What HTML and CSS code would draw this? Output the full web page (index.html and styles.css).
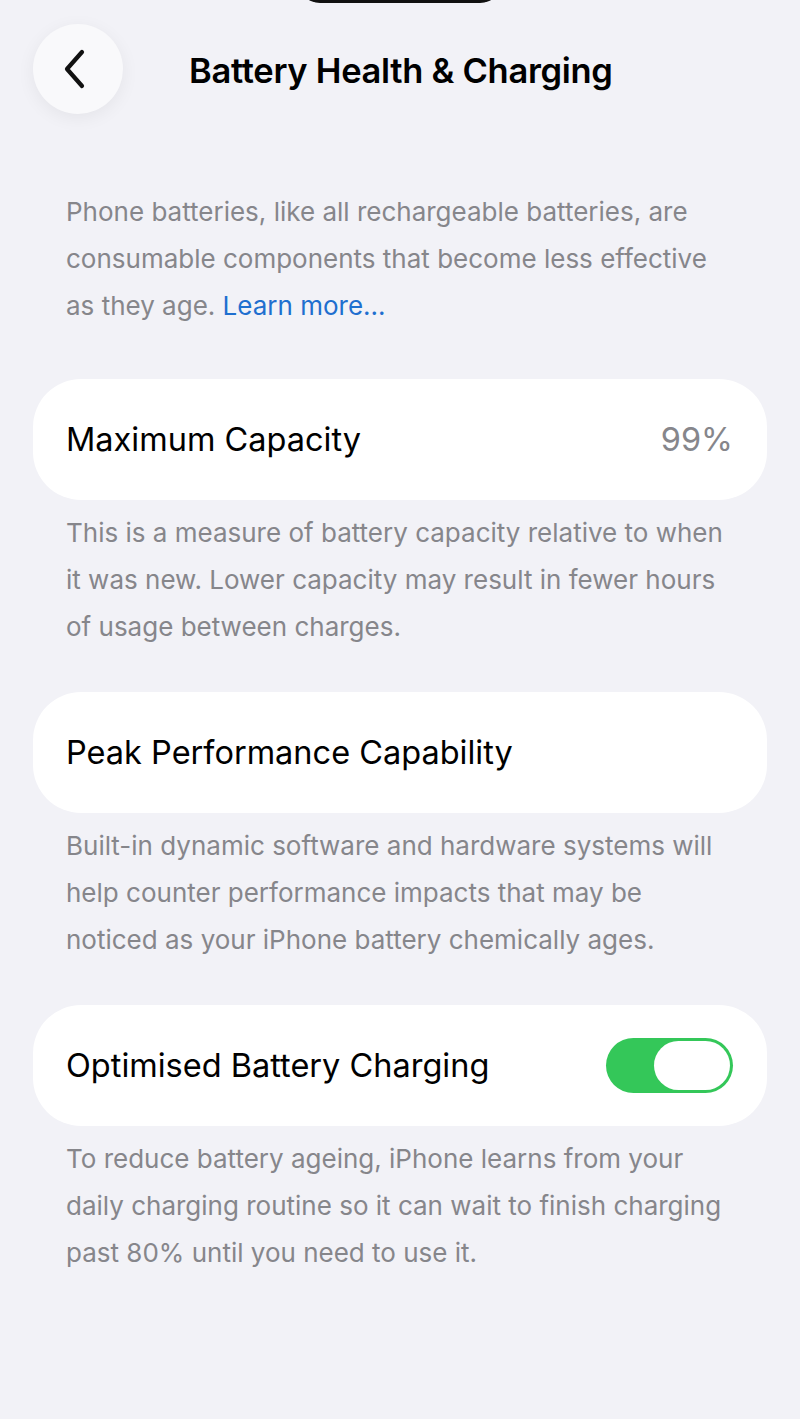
FILE: index.html
```html
<!DOCTYPE html>
<html lang="en">
<head>
    <meta charset="UTF-8">
    <meta name="viewport" content="width=device-width, initial-scale=1.0">
    <title>Battery Health &amp; Charging</title>
    <link rel="stylesheet" href="styles.css">
</head>
<body>
    <div class="island"></div>

    <header class="nav-bar">
        <button class="back-button" aria-label="Back">
            <svg width="26" height="40" viewBox="0 0 26 40">
                <path d="M20 3 L5 20 L20 37" fill="none" stroke="#111" stroke-width="4.2" stroke-linecap="round" stroke-linejoin="round"/>
            </svg>
        </button>
        <h1>Battery Health &amp; Charging</h1>
    </header>

    <main class="content">
        <p class="note intro">
            Phone batteries, like all rechargeable batteries, are consumable components that become less effective as they age. <a href="#" class="link">Learn more...</a>
        </p>

        <div class="card">
            <span class="label">Maximum Capacity</span>
            <span class="value">99%</span>
        </div>
        <p class="note">
            This is a measure of battery capacity relative to when it was new. Lower capacity may result in fewer hours of usage between charges.
        </p>

        <div class="card">
            <span class="label">Peak Performance Capability</span>
        </div>
        <p class="note">
            Built-in dynamic software and hardware systems will help counter performance impacts that may be noticed as your iPhone battery chemically ages.
        </p>

        <div class="card">
            <span class="label">Optimised Battery Charging</span>
            <div class="toggle on">
                <div class="knob"></div>
            </div>
        </div>
        <p class="note">
            To reduce battery ageing, iPhone learns from your daily charging routine so it can wait to finish charging past 80% until you need to use it.
        </p>
    </main>
</body>
</html>
```

FILE: styles.css
```css
body {
    margin: 0;
    background-color: #f2f2f7;
    font-family: 'Inter', 'Noto Sans', sans-serif;
    color: #000;
    min-height: 100vh;
}

/* dynamic island edge peeking at the top */
.island {
    position: absolute;
    top: -40px;
    left: 298px;
    width: 204px;
    height: 43px;
    border-radius: 0 0 22px 22px;
    background-color: #111;
}

.nav-bar {
    display: flex;
    align-items: center;
    padding: 24px 0 0 33px;
}

.back-button {
    width: 90px;
    height: 90px;
    border-radius: 50%;
    border: none;
    background-color: #f9f9fb;
    box-shadow: 0 4px 18px rgba(0, 0, 0, 0.06);
    display: flex;
    align-items: center;
    justify-content: center;
    padding: 0 6px 0 0;
    cursor: pointer;
}

h1 {
    margin: 2px 0 0 66px;
    font-size: 34.5px;
    font-weight: 600;
    letter-spacing: -0.3px;
}

.content {
    padding: 0 33px;
}

.note {
    margin: 9px 0 0;
    padding: 0 33px;
    font-size: 26px;
    line-height: 47px;
    color: #86868b;
}

.note.intro {
    margin-top: 74px;
    margin-bottom: 50px;
}

.link {
    color: #1f6fcf;
    text-decoration: none;
}

.card {
    height: 121px;
    box-sizing: border-box;
    padding: 0 34px 0 33px;
    background-color: white;
    border-radius: 48px;
    display: flex;
    align-items: center;
    justify-content: space-between;
}

.note + .card {
    margin-top: 42px;
}

.note.intro + .card {
    margin-top: 0;
}

.label {
    font-size: 32.5px;
}

.value {
    font-size: 32.5px;
    color: #86868b;
}

.toggle {
    width: 127px;
    height: 55px;
    border-radius: 28px;
    background-color: #e5e5ea;
    box-sizing: border-box;
    padding: 3px;
    display: flex;
}

.toggle.on {
    background-color: #34c759;
    justify-content: flex-end;
}

.knob {
    width: 76px;
    height: 49px;
    border-radius: 25px;
    background-color: white;
}
```
